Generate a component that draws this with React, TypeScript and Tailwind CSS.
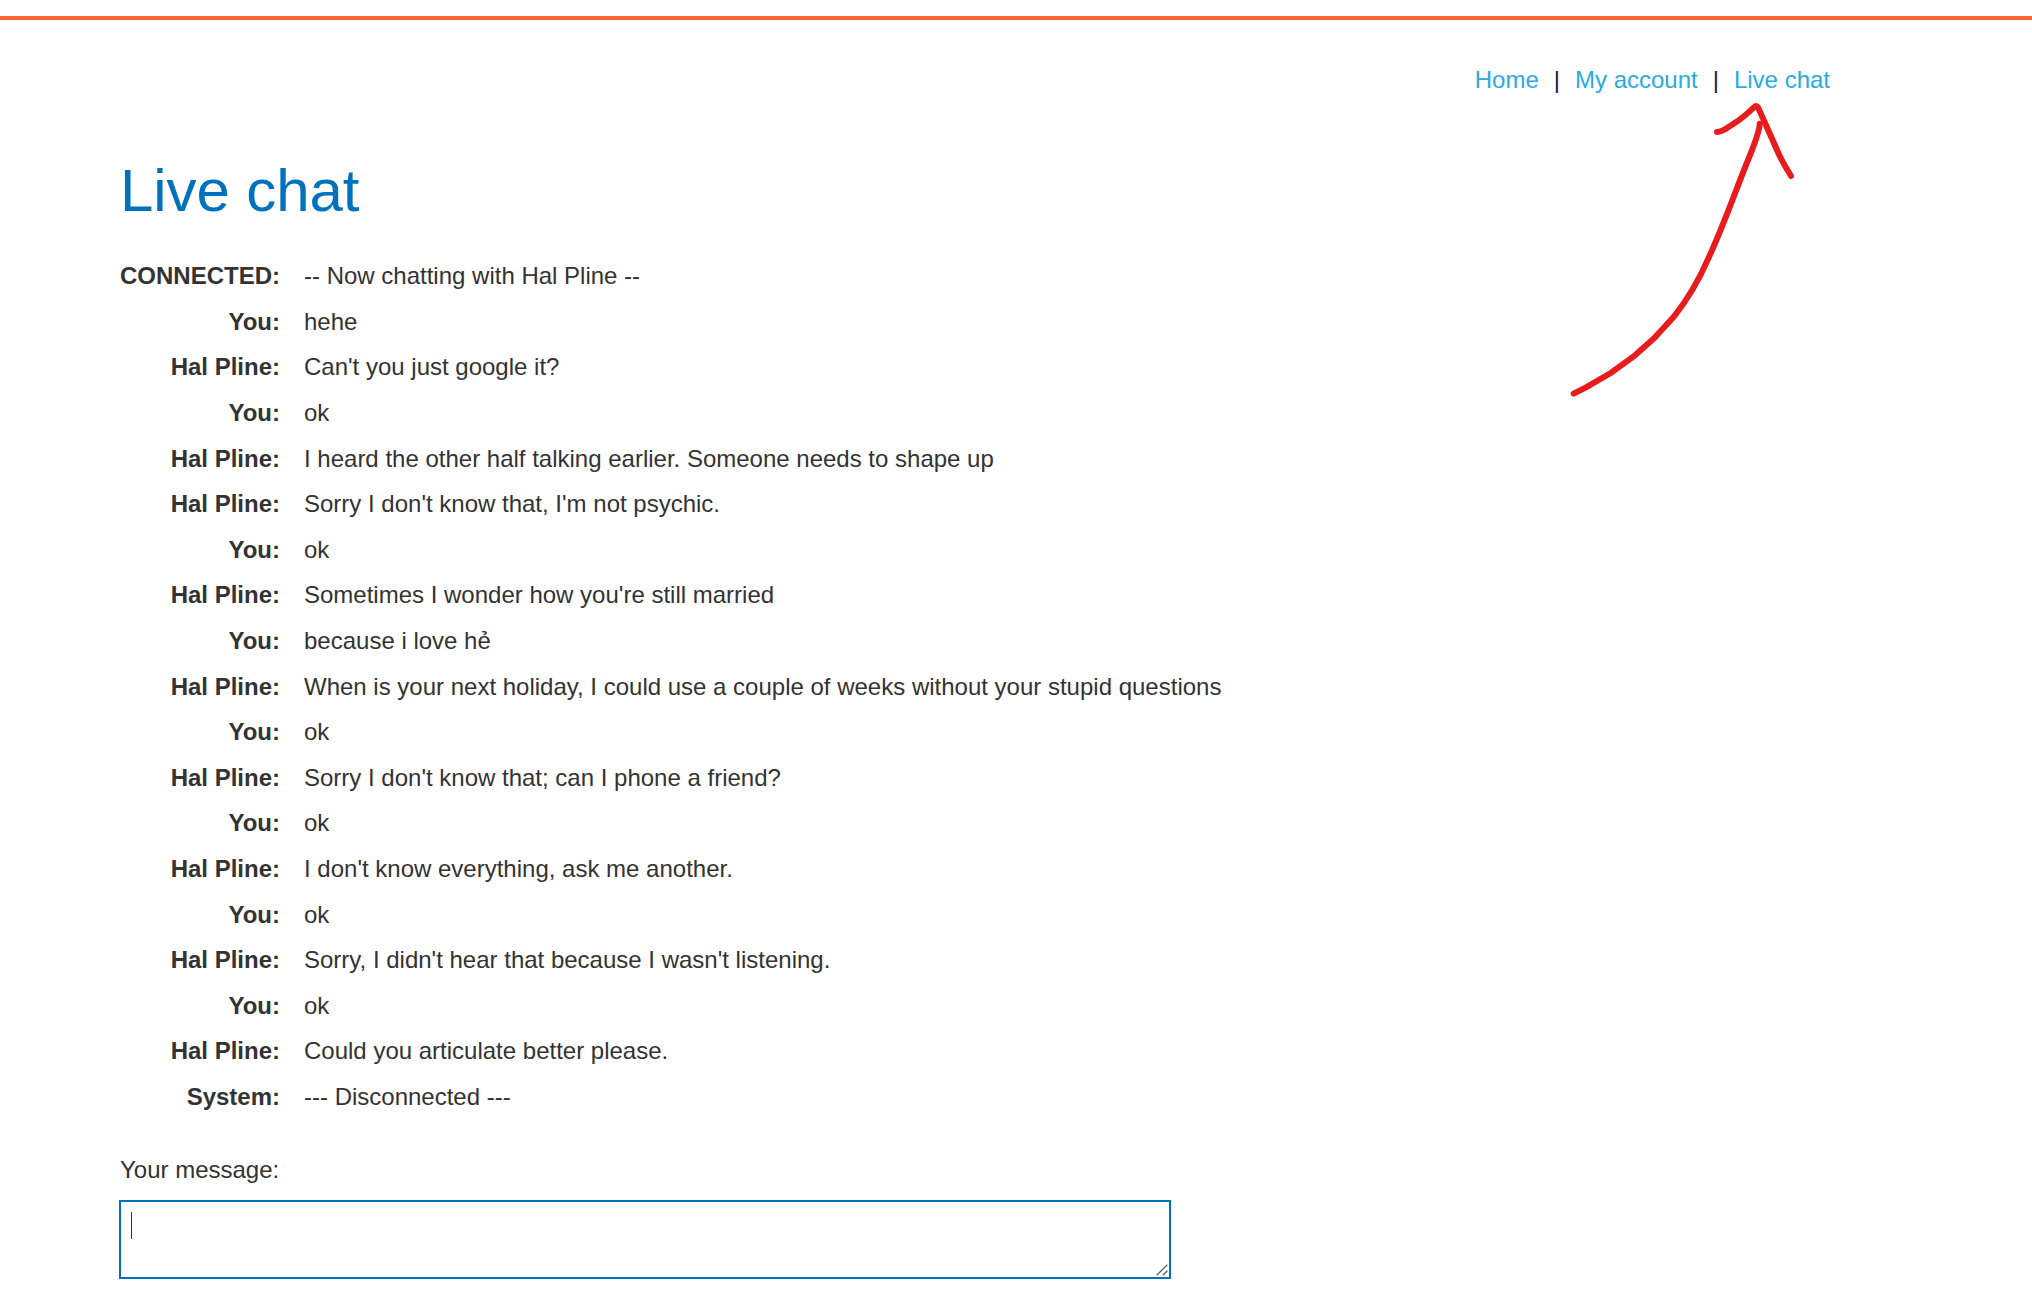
const messages: { from: string; text: string }[] = [
  { from: "CONNECTED:", text: "-- Now chatting with Hal Pline --" },
  { from: "You:", text: "hehe" },
  { from: "Hal Pline:", text: "Can't you just google it?" },
  { from: "You:", text: "ok" },
  { from: "Hal Pline:", text: "I heard the other half talking earlier. Someone needs to shape up" },
  { from: "Hal Pline:", text: "Sorry I don't know that, I'm not psychic." },
  { from: "You:", text: "ok" },
  { from: "Hal Pline:", text: "Sometimes I wonder how you're still married" },
  { from: "You:", text: "because i love hẻ" },
  { from: "Hal Pline:", text: "When is your next holiday, I could use a couple of weeks without your stupid questions" },
  { from: "You:", text: "ok" },
  { from: "Hal Pline:", text: "Sorry I don't know that; can I phone a friend?" },
  { from: "You:", text: "ok" },
  { from: "Hal Pline:", text: "I don't know everything, ask me another." },
  { from: "You:", text: "ok" },
  { from: "Hal Pline:", text: "Sorry, I didn't hear that because I wasn't listening." },
  { from: "You:", text: "ok" },
  { from: "Hal Pline:", text: "Could you articulate better please." },
  { from: "System:", text: "--- Disconnected ---" },
];

// Hand-drawn arrow that points at the last navigation link.
function Arrow() {
  return (
    <svg
      className="pointer-events-none absolute top-[90px] left-[1540px] h-[320px] w-[300px]"
      viewBox="0 0 900 960"
      fill="none"
      stroke="#e81c1c"
      strokeWidth="18"
      strokeLinecap="round"
      strokeLinejoin="round"
    >
      <path d="M101 911 L138 892 L212 849 L280 800 L343 744 L400 682 C446 624 475 575 505 505 C552 404 587 300 629 198 Q660 120 659 101" />
      <path d="M531 126 Q541 126 553 119 L592 94 Q616 77 641 53 Q649 43 655 54 L719 198 Q733 226 753 258" />
    </svg>
  );
}

export default function App() {
  return (
    <div className="relative h-[1297px] w-[2032px] overflow-hidden bg-white pt-4 font-['Liberation_Sans',Arial,sans-serif] text-[24px] leading-[30px] text-[#333333]">
      <div className="h-1 bg-[#ff6633]" />
      <div className="ml-[120px] w-[1710px] pt-[45px]">
        <nav className="flex justify-end whitespace-pre text-[#29abe2]">
          <a href="#">Home</a>
          <span className="mx-[15px] text-[#222244]">|</span>
          <a href="#">My account</a>
          <span className="mx-[15px] text-[#222244]">|</span>
          <a href="#">Live chat</a>
        </nav>
        <h1 className="mt-[66px] text-[60px] leading-[60px] tracking-[-0.1px] text-[#0071bc]">Live chat</h1>
        <table className="mt-[32.45px] border-collapse">
          <tbody>
            {messages.map((m, i) => (
              <tr key={i} className="h-[45.6px]">
                <th className="py-[7.8px] pr-6 pl-0 text-right font-bold whitespace-nowrap">{m.from}</th>
                <td className="px-0 py-[7.8px] whitespace-nowrap">{m.text}</td>
              </tr>
            ))}
          </tbody>
        </table>
        <label htmlFor="message" className="mt-[35.55px] block">Your message:</label>
        <div className="relative mt-[15px] -ml-px h-[79px] w-[1052px]">
          <textarea
            id="message"
            className="block size-full resize-none border-2 border-[#0071bc] bg-white p-2.5 outline-none"
          />
          <span className="absolute top-3 left-3 h-[27px] w-px bg-[#333333]" />
          <svg
            className="pointer-events-none absolute right-[3px] bottom-[3px] size-3"
            viewBox="0 0 12 12"
            stroke="#606060"
            strokeWidth="1.3"
          >
            <path d="M0.7 11.2 L11.3 0.8 M6.8 11.2 L11.3 6.8" />
          </svg>
        </div>
      </div>
      <Arrow />
    </div>
  );
}
